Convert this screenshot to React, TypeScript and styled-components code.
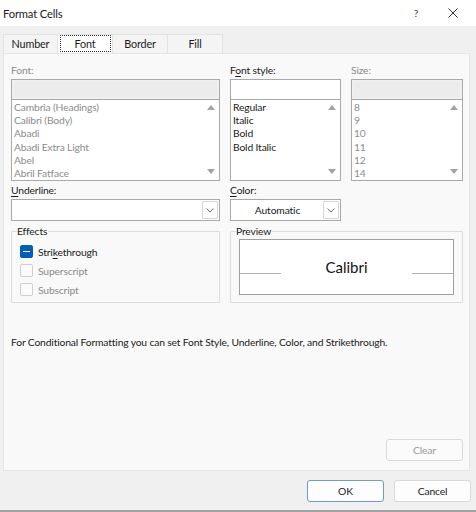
import React from 'react';
import styled, { createGlobalStyle } from 'styled-components';

const GlobalStyle = createGlobalStyle`
  html, body {
    margin: 0;
    padding: 0;
    background: #f0f0f0;
  }
  * {
    box-sizing: border-box;
  }
`;

const Window = styled.div`
  width: 476px;
  height: 512px;
  display: flex;
  flex-direction: column;
  background: #f0f0f0;
  font-family: 'Lato', 'Open Sans', sans-serif;
  font-size: 10.3px;
  letter-spacing: -0.15px;
  color: #1b1b1b;
  border-bottom: 2px solid #a3a3a3;
  overflow: hidden;
`;

const TitleBar = styled.div`
  height: 26px;
  flex: none;
  display: flex;
  align-items: center;
  background: #ffffff;
  padding-left: 3px;
`;

const Title = styled.div`
  flex: 1;
  font-size: 11.2px;
  color: #1b1b1b;
`;

const TitleButton = styled.div<{ $width: number }>`
  width: ${(p) => p.$width}px;
  height: 26px;
  display: flex;
  align-items: center;
  justify-content: center;
  color: #333;
`;

const Body = styled.div`
  flex: 1;
  display: flex;
  flex-direction: column;
  padding: 8px 6px 0 3px;
`;

const TabStrip = styled.div`
  display: flex;
  height: 19px;
  flex: none;
`;

const Tab = styled.div<{ $active?: boolean; $width: number }>`
  width: ${(p) => p.$width}px;
  display: flex;
  align-items: center;
  justify-content: center;
  padding-bottom: 1px;
  font-size: 10.8px;
  background: ${(p) => (p.$active ? '#ffffff' : '#f4f4f4')};
  border: 1px solid #e3e3e3;
  border-bottom: none;
  margin-left: -1px;
  &:first-child {
    margin-left: 0;
  }
`;

const FocusLabel = styled.span`
  display: flex;
  align-items: center;
  justify-content: center;
  width: 51px;
  height: 17px;
  border: 1px dotted #333;
`;

const Panel = styled.div`
  height: 418px;
  flex: none;
  background: #f9f9f9;
  border: 1px solid #e6e6e6;
  padding: 9px 6px 9px 7px;
  display: flex;
  flex-direction: column;
`;

const FieldGrid = styled.div`
  display: grid;
  grid-template-columns: 209px 111px 112px;
  column-gap: 10px;
`;

const Label = styled.div<{ $disabled?: boolean }>`
  height: 14px;
  line-height: 14px;
  margin-bottom: 2px;
  color: ${(p) => (p.$disabled ? '#8a8a8a' : '#1b1b1b')};
  u {
    text-underline-offset: 2px;
  }
`;

const TextBox = styled.div<{ $disabled?: boolean }>`
  height: 21px;
  border: 1px solid #a9a9a9;
  background: ${(p) => (p.$disabled ? '#f0f0f0' : '#ffffff')};
  padding: 2px;
  & > div {
    height: 100%;
    background: ${(p) => (p.$disabled ? '#ececec' : '#ffffff')};
  }
`;

const ListBox = styled.div`
  height: 81px;
  border: 1px solid #a9a9a9;
  border-top: none;
  background: #ffffff;
  display: flex;
  overflow: hidden;
`;

const ListItems = styled.div`
  flex: 1;
  padding: 1px 0 0 2px;
`;

const ListItem = styled.div<{ $disabled?: boolean }>`
  height: 13.2px;
  line-height: 13px;
  white-space: nowrap;
  color: ${(p) => (p.$disabled ? '#8c8c8c' : '#1b1b1b')};
`;

const ScrollBar = styled.div`
  width: 17px;
  display: flex;
  flex-direction: column;
  justify-content: space-between;
  align-items: center;
  padding: 5px 0 6px;
`;

const Arrow = styled.div<{ $down?: boolean }>`
  width: 0;
  height: 0;
  border-left: 4px solid transparent;
  border-right: 4px solid transparent;
  ${(p) =>
    p.$down ? 'border-top: 5px solid #a3a3a3;' : 'border-bottom: 5px solid #a3a3a3;'}
`;

const SecondRow = styled.div`
  display: grid;
  grid-template-columns: 209px 111px;
  column-gap: 10px;
  margin-top: 2px;
`;

const Combo = styled.div`
  height: 22px;
  border: 1px solid #a9a9a9;
  background: #ffffff;
  display: flex;
  padding: 1px;
`;

const ComboText = styled.div`
  flex: 1;
  display: flex;
  align-items: center;
  justify-content: center;
`;

const ComboButton = styled.div`
  width: 16px;
  display: flex;
  align-items: center;
  justify-content: center;
  border: 1px solid #d6d6d6;
  border-radius: 1px;
  color: #666;
`;

const GroupRow = styled.div`
  display: grid;
  grid-template-columns: 209px 233px;
  column-gap: 10px;
  margin-top: 4px;
`;

const Group = styled.fieldset`
  margin: 0;
  height: 78px;
  border: 1px solid #dcdcdc;
  border-radius: 1px;
  padding: 0 8px 0 8px;
  min-width: 0;
`;

const Legend = styled.legend`
  padding: 0 1px 0 0;
  margin-left: -3px;
  line-height: 12px;
  color: #1b1b1b;
`;

const CheckRow = styled.div<{ $disabled?: boolean }>`
  display: flex;
  align-items: center;
  gap: 5px;
  height: 19px;
  color: ${(p) => (p.$disabled ? '#8a8a8a' : '#1b1b1b')};
  u {
    text-underline-offset: 2px;
  }
`;

const Check = styled.div<{ $checked?: boolean }>`
  width: 13px;
  height: 13px;
  border-radius: 2px;
  border: 1px solid ${(p) => (p.$checked ? '#005fb8' : '#cfcfcf')};
  background: ${(p) => (p.$checked ? '#005fb8' : '#fbfbfb')};
  display: flex;
  align-items: center;
  justify-content: center;
  &::after {
    content: '';
    display: ${(p) => (p.$checked ? 'block' : 'none')};
    width: 7px;
    height: 1.5px;
    background: #ffffff;
  }
`;

const Checks = styled.div`
  display: flex;
  flex-direction: column;
  padding-top: 5px;
`;

const PreviewBox = styled.div`
  margin: 2px 0 0 0;
  height: 56px;
  border: 1px solid #a0a0a0;
  background: #ffffff;
  display: flex;
  align-items: center;
`;

const BaseLine = styled.div`
  width: 41px;
  height: 1px;
  background: #b0b0b0;
  align-self: flex-end;
  margin-bottom: 20px;
`;

const PreviewText = styled.div`
  flex: 1;
  text-align: center;
  font-size: 15px;
  letter-spacing: 0;
  color: #111;
  padding-bottom: 1px;
`;

const Note = styled.div`
  margin-top: 33px;
  color: #1b1b1b;
`;

const ClearRow = styled.div`
  margin-top: auto;
  display: flex;
  justify-content: flex-end;
`;

const Button = styled.div<{ $primary?: boolean; $disabled?: boolean }>`
  width: 77px;
  height: 22px;
  display: flex;
  align-items: center;
  justify-content: center;
  background: ${(p) => (p.$disabled ? '#fbfbfb' : '#fdfdfd')};
  border: 1px solid ${(p) => (p.$primary ? '#6b9bd1' : '#d9d9d9')};
  border-radius: 3px;
  color: ${(p) => (p.$disabled ? '#9a9a9a' : '#1b1b1b')};
`;

const Footer = styled.div`
  display: flex;
  justify-content: flex-end;
  gap: 10px;
  padding: 9px 0 0;
  margin-right: -1px;
`;

const Chevron = () => (
  <svg width="8" height="5" viewBox="0 0 8 5">
    <path d="M0.5 0.5 L4 4 L7.5 0.5" fill="none" stroke="#707070" strokeWidth="1" />
  </svg>
);

const CloseIcon = () => (
  <svg width="10" height="10" viewBox="0 0 10 10">
    <path d="M0.5 0.5 L9.5 9.5 M9.5 0.5 L0.5 9.5" stroke="#333" strokeWidth="1" />
  </svg>
);

const fonts = [
  'Cambria (Headings)',
  'Calibri (Body)',
  'Abadi',
  'Abadi Extra Light',
  'Abel',
  'Abril Fatface',
];
const styles = ['Regular', 'Italic', 'Bold', 'Bold Italic'];
const sizes = ['8', '9', '10', '11', '12', '14'];

const List = ({ items, disabled }: { items: string[]; disabled?: boolean }) => (
  <ListBox>
    <ListItems>
      {items.map((item) => (
        <ListItem key={item} $disabled={disabled}>
          {item}
        </ListItem>
      ))}
    </ListItems>
    <ScrollBar>
      <Arrow />
      <Arrow $down />
    </ScrollBar>
  </ListBox>
);

export default function App() {
  return (
    <>
      <GlobalStyle />
      <Window>
        <TitleBar>
          <Title>Format Cells</Title>
          <TitleButton $width={28}>?</TitleButton>
          <TitleButton $width={46}>
            <CloseIcon />
          </TitleButton>
        </TitleBar>
        <Body>
          <TabStrip>
            <Tab $width={55}>Number</Tab>
            <Tab $width={56} $active>
              <FocusLabel>Font</FocusLabel>
            </Tab>
            <Tab $width={56}>Border</Tab>
            <Tab $width={56}>Fill</Tab>
          </TabStrip>
          <Panel>
            <FieldGrid>
              <div>
                <Label $disabled>Font:</Label>
                <TextBox $disabled>
                  <div />
                </TextBox>
                <List items={fonts} disabled />
              </div>
              <div>
                <Label>
                  F<u>o</u>nt style:
                </Label>
                <TextBox>
                  <div />
                </TextBox>
                <List items={styles} />
              </div>
              <div>
                <Label $disabled>Size:</Label>
                <TextBox $disabled>
                  <div />
                </TextBox>
                <List items={sizes} disabled />
              </div>
            </FieldGrid>
            <SecondRow>
              <div>
                <Label>
                  <u>U</u>nderline:
                </Label>
                <Combo>
                  <ComboText />
                  <ComboButton>
                    <Chevron />
                  </ComboButton>
                </Combo>
              </div>
              <div>
                <Label>
                  <u>C</u>olor:
                </Label>
                <Combo>
                  <ComboText>Automatic</ComboText>
                  <ComboButton>
                    <Chevron />
                  </ComboButton>
                </Combo>
              </div>
            </SecondRow>
            <GroupRow>
              <Group>
                <Legend>Effects</Legend>
                <Checks>
                  <CheckRow>
                    <Check $checked />
                    <span>
                      Stri<u>k</u>ethrough
                    </span>
                  </CheckRow>
                  <CheckRow $disabled>
                    <Check />
                    <span>Superscript</span>
                  </CheckRow>
                  <CheckRow $disabled>
                    <Check />
                    <span>Subscript</span>
                  </CheckRow>
                </Checks>
              </Group>
              <Group>
                <Legend>Preview</Legend>
                <PreviewBox>
                  <BaseLine />
                  <PreviewText>Calibri</PreviewText>
                  <BaseLine />
                </PreviewBox>
              </Group>
            </GroupRow>
            <Note>
              For Conditional Formatting you can set Font Style, Underline, Color, and
              Strikethrough.
            </Note>
            <ClearRow>
              <Button $disabled>Clear</Button>
            </ClearRow>
          </Panel>
          <Footer>
            <Button $primary>OK</Button>
            <Button>Cancel</Button>
          </Footer>
        </Body>
      </Window>
    </>
  );
}
